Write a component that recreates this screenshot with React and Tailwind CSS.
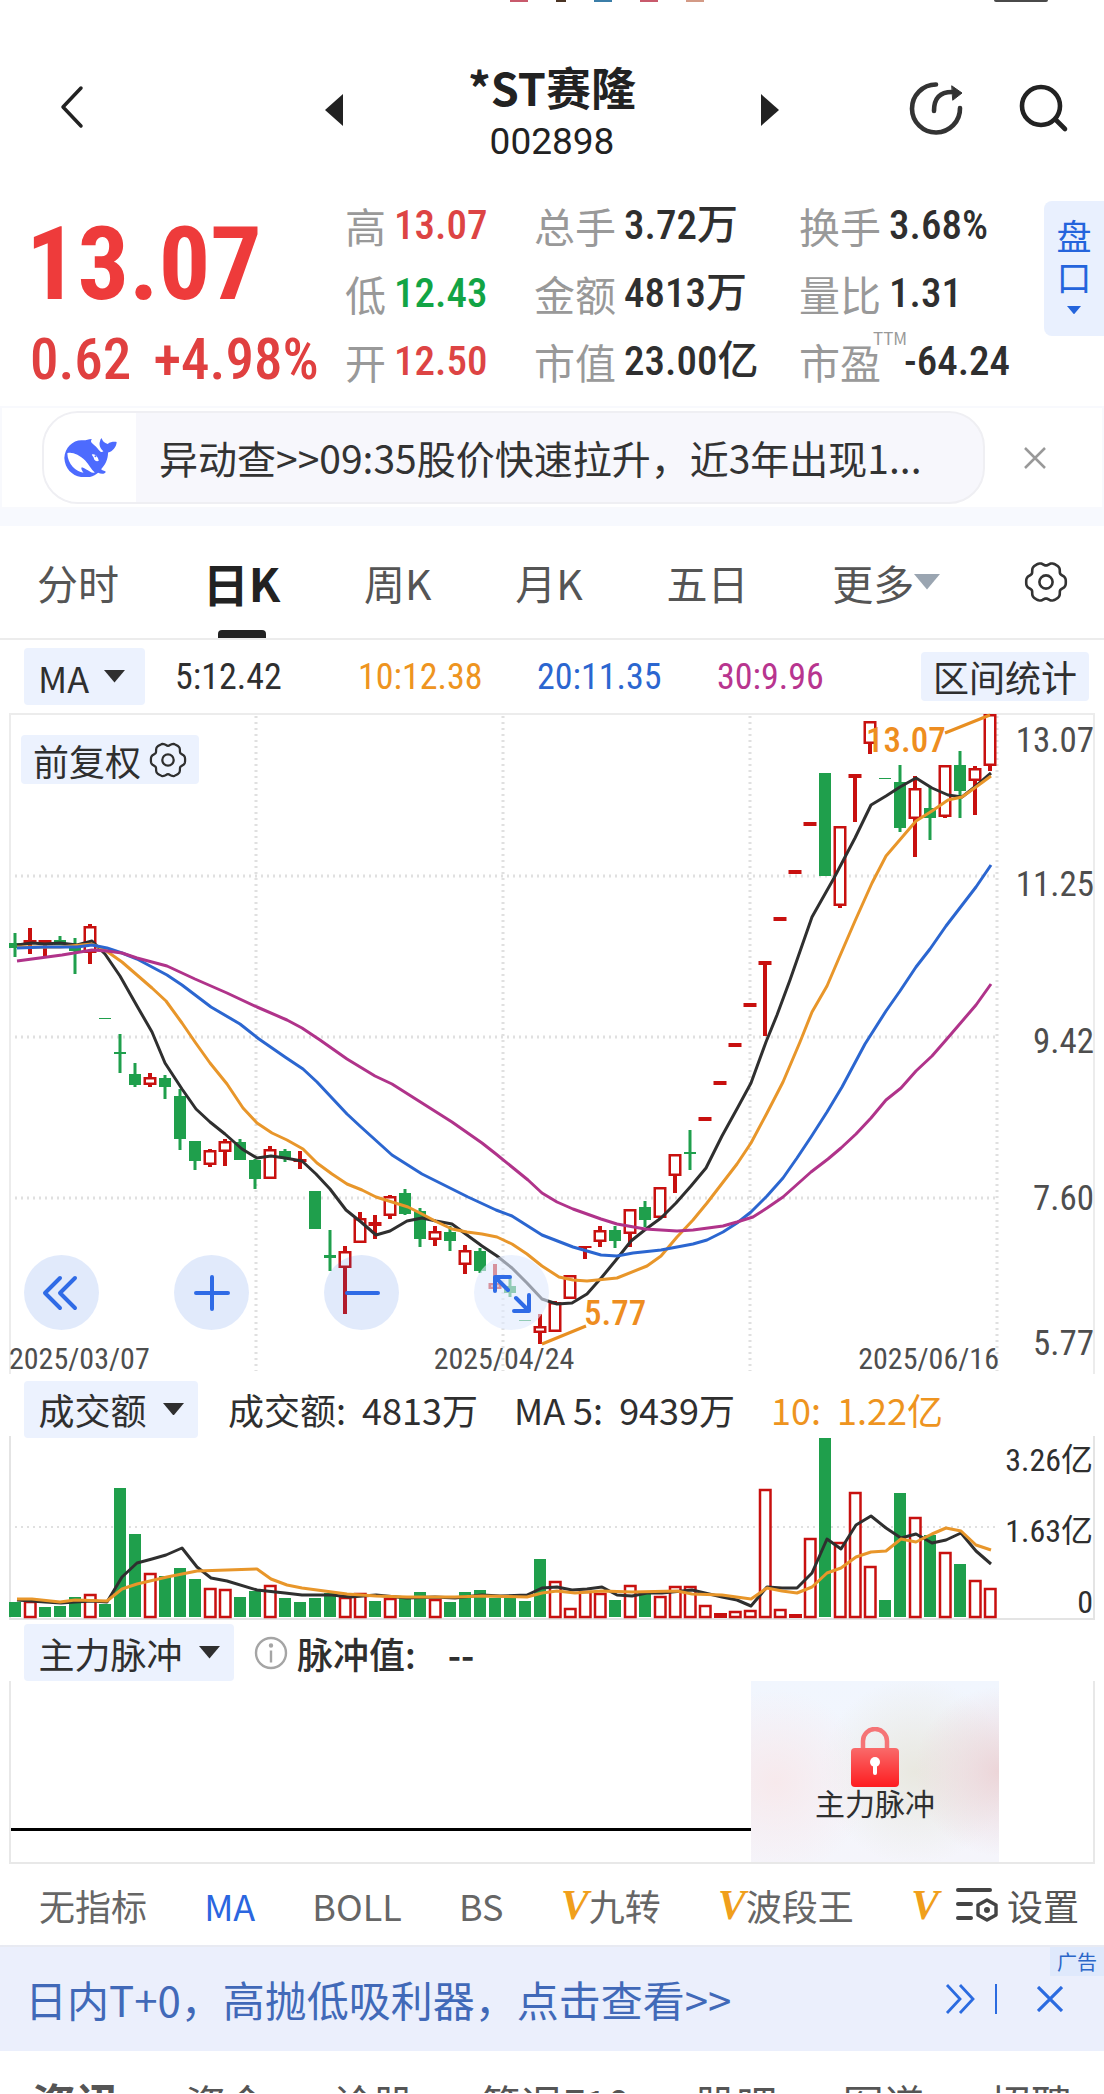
import React from "react";

const RED = "#c8100f";
const GREEN = "#1f9f4c";

/* [high, body top, body bottom, low, kind]  g: fall, r: rise, d: flat */
const CANDLES = [
  [933, 943, 948, 957, "g"], [928, 940, 944, 954, "r"], [940, 940, 944, 957, "r"], [936, 940, 945, 945, "g"],
  [938, 946, 951, 974, "g"], [924, 926, 953, 964, "r"], [1018, 1018, 1019, 1019, "d"], [1034, 1052, 1054, 1073, "g"],
  [1063, 1074, 1085, 1087, "g"], [1073, 1077, 1085, 1087, "r"], [1075, 1078, 1087, 1099, "g"], [1089, 1096, 1139, 1150, "g"],
  [1141, 1141, 1161, 1170, "g"], [1149, 1150, 1165, 1167, "r"], [1139, 1141, 1152, 1166, "r"], [1139, 1142, 1160, 1160, "g"],
  [1159, 1160, 1179, 1189, "g"], [1146, 1149, 1179, 1179, "r"], [1149, 1151, 1158, 1162, "g"], [1151, 1159, 1162, 1169, "r"],
  [1191, 1191, 1229, 1229, "g"], [1230, 1255, 1258, 1271, "g"], [1246, 1251, 1268, 1314, "r"], [1212, 1218, 1243, 1243, "r"],
  [1215, 1222, 1226, 1239, "r"], [1195, 1196, 1216, 1219, "r"], [1189, 1193, 1214, 1215, "g"], [1208, 1211, 1239, 1247, "g"],
  [1226, 1231, 1240, 1246, "r"], [1226, 1232, 1241, 1251, "g"], [1245, 1250, 1265, 1274, "r"], [1248, 1251, 1271, 1273, "g"],
  [1264, 1283, 1289, 1290, "r"], [1277, 1286, 1293, 1297, "g"], [1320, 1320, 1321, 1321, "d"], [1314, 1326, 1333, 1344, "r"],
  [1301, 1302, 1332, 1332, "r"], [1275, 1275, 1299, 1299, "r"], [1246, 1246, 1248, 1259, "r"], [1226, 1230, 1242, 1247, "r"],
  [1226, 1230, 1241, 1248, "g"], [1209, 1209, 1234, 1247, "r"], [1201, 1207, 1220, 1227, "g"], [1187, 1187, 1218, 1218, "r"],
  [1154, 1154, 1176, 1193, "r"], [1130, 1152, 1154, 1170, "g"], [1117, 1117, 1121, 1121, "r"], [1081, 1081, 1085, 1085, "r"],
  [1043, 1043, 1047, 1047, "r"], [1003, 1003, 1007, 1007, "r"], [961, 961, 965, 1036, "r"], [917, 917, 921, 921, "r"],
  [870, 870, 874, 874, "r"], [822, 822, 826, 826, "r"], [773, 773, 876, 876, "g"], [826, 826, 906, 908, "r"],
  [774, 774, 778, 822, "r"], [721, 721, 744, 754, "r"], [778, 778, 779, 779, "d"], [765, 782, 828, 832, "g"],
  [776, 788, 819, 857, "r"], [787, 808, 818, 840, "g"], [765, 765, 817, 818, "r"], [751, 765, 791, 818, "g"],
  [766, 768, 781, 815, "r"], [714, 714, 766, 771, "r"],
];

const VOLUMES = [
  [1602, "g"], [1601, "r"], [1607, "g"], [1606, "g"], [1597, "g"], [1594, "r"], [1604, "g"], [1488, "g"], [1534, "g"],
  [1573, "r"], [1576, "g"], [1568, "g"], [1579, "g"], [1588, "r"], [1589, "r"], [1597, "g"], [1591, "g"], [1585, "r"],
  [1598, "g"], [1602, "g"], [1598, "g"], [1593, "g"], [1597, "r"], [1593, "r"], [1601, "g"], [1598, "r"], [1598, "g"],
  [1592, "g"], [1599, "r"], [1602, "g"], [1592, "g"], [1590, "g"], [1598, "g"], [1598, "g"], [1601, "g"], [1559, "g"],
  [1581, "r"], [1608, "r"], [1591, "r"], [1593, "r"], [1600, "g"], [1585, "r"], [1593, "g"], [1596, "r"], [1586, "r"],
  [1586, "r"], [1605, "r"], [1613, "r"], [1611, "r"], [1610, "r"], [1489, "r"], [1609, "r"], [1614, "r"], [1538, "r"],
  [1438, "g"], [1542, "r"], [1492, "r"], [1566, "r"], [1600, "g"], [1493, "g"], [1517, "r"], [1535, "g"], [1552, "r"],
  [1564, "g"], [1580, "r"], [1588, "r"],
];

const MA5 = "17,945 32,943 45,944 60,943 77,945 92,941 105,954 120,976 137,1006 152,1032 165,1063 182,1089 196,1109 210,1122 225,1134 242,1149 257,1158 271,1156 285,1158 302,1161 316,1174 330,1189 346,1210 361,1222 376,1235 390,1231 407,1221 422,1218 436,1221 452,1224 467,1235 482,1246 497,1256 512,1268 527,1283 542,1299 557,1304 572,1303 587,1294 602,1277 616,1260 631,1241 646,1229 661,1218 676,1203 691,1186 706,1168 722,1136 738,1107 751,1083 766,1042 777,1015 790,980 812,917 834,878 855,838 871,805 886,796 900,787 916,778 932,788 948,795 962,797 976,786 991,773";
const MA10 = "17,947 60,947 92,944 105,950 122,962 137,975 152,988 166,1001 182,1023 195,1042 210,1063 227,1084 243,1108 257,1123 272,1133 287,1140 303,1149 317,1163 332,1174 347,1184 362,1190 376,1197 392,1202 408,1207 422,1214 437,1222 452,1229 467,1232 482,1234 497,1237 512,1244 527,1254 542,1266 559,1277 573,1280 587,1281 617,1278 647,1266 661,1256 677,1237 693,1220 707,1203 737,1164 751,1143 767,1113 783,1082 800,1042 812,1012 827,986 839,958 855,921 872,883 886,856 916,821 932,811 948,800 962,797 976,787 991,776";
const MA20 = "17,948 45,947 77,947 92,945 107,948 122,953 137,959 152,967 167,975 182,985 211,1007 240,1024 259,1039 285,1057 303,1069 317,1082 347,1114 361,1127 392,1155 422,1174 438,1182 468,1197 496,1210 512,1216 542,1235 573,1247 601,1255 617,1256 633,1253 661,1250 693,1244 707,1240 723,1232 737,1223 751,1212 767,1196 783,1178 797,1158 811,1137 827,1112 842,1087 865,1044 886,1011 900,991 916,967 930,949 946,926 976,887 991,865";
const MA30 = "17,961 32,959 62,955 80,952 92,950 107,951 122,953 137,958 167,966 195,979 227,993 257,1007 287,1020 302,1028 320,1040 347,1059 375,1076 392,1084 422,1103 452,1122 482,1143 496,1154 512,1167 528,1180 542,1193 557,1202 573,1209 601,1219 617,1224 645,1229 677,1231 693,1230 723,1226 737,1222 753,1217 767,1208 783,1197 811,1172 828,1159 841,1148 856,1134 871,1118 886,1100 901,1088 916,1071 932,1056 946,1040 976,1005 991,984";
const VMA5 = "17,1600 45,1602 61,1603 75,1602 92,1601 107,1602 122,1577 137,1563 152,1559 166,1555 182,1548 197,1567 211,1578 227,1581 257,1590 285,1593 302,1595 332,1595 350,1597 376,1595 407,1598 435,1597 455,1598 482,1595 500,1596 527,1595 542,1588 557,1587 572,1590 587,1589 602,1587 617,1595 632,1596 647,1593 662,1593 692,1590 722,1597 737,1600 751,1606 767,1587 782,1588 797,1588 812,1573 827,1539 841,1549 856,1525 871,1516 886,1528 901,1538 916,1534 932,1543 946,1540 961,1533 976,1551 991,1564";
const VMA10 = "17,1599 32,1599 60,1602 75,1600 107,1601 122,1589 137,1584 167,1577 197,1571 227,1570 257,1569 271,1579 287,1585 302,1588 332,1592 347,1594 376,1596 407,1597 455,1597 482,1596 527,1597 542,1593 557,1591 575,1593 602,1591 632,1592 677,1591 692,1594 722,1595 751,1599 767,1588 782,1591 797,1593 812,1587 827,1573 841,1568 856,1557 871,1552 886,1551 901,1539 916,1542 932,1534 946,1528 961,1531 976,1545 991,1550";

const GEAR = (() => {
  const pts = [];
  for (let i = 0; i < 96; i += 1) {
    const t = (i / 96) * Math.PI * 2;
    const r = 18.6 + 1.7 * Math.cos(6 * t) - 0.5 * Math.cos(12 * t);
    pts.push(`${(22 + r * Math.cos(t)).toFixed(2)},${(22 + r * Math.sin(t)).toFixed(2)}`);
  }
  return pts.join(" ");
})();

function Gear({ className }) {
  return (
    <svg viewBox="0 0 44 44" className={className} fill="none" stroke="currentColor" strokeWidth="2.6" strokeLinejoin="round" aria-hidden="true">
      <polygon points={GEAR} />
      <circle cx="22" cy="22" r="6.6" />
    </svg>
  );
}

function Down({ className }) {
  return (
    <svg viewBox="0 0 20 12" className={className} fill="currentColor" aria-hidden="true">
      <path d="M0 0h20L10 12z" />
    </svg>
  );
}

function Whale() {
  return (
    <svg viewBox="0 0 160 120" className="w-[53px]" aria-hidden="true">
      <path fill="#4d6bfe" d="M1 60C3 28 28 5 56 7c10 1 16-3 28-4-4 6-3 10 1 13 8 7 15 13 20 20 5 6 9 8 14 4-9-7-15-18-10-31 1-5 3-8 5-8 1 8 8 14 18 17 8-6 17-7 27-6-1 16-12 28-26 32 0 21-9 38-21 50 5 5 13 5 14 8-2 8-15 7-23 3-9 8-20 14-38 14C31 119 3 97 1 60z" />
      <path fill="#fff" d="M10 46c13-5 36 4 54 22 12 13 18 28 29 36-10 3-15-4-21-7-7-3-9-6-18-9-4 3 0 9 5 17C36 101 11 79 10 46z" />
      <path fill="#fff" d="M84 50c9-4 19 6 21 19-8 3-14-2-15-8 0-4-5-6-6-11z" />
      <circle cx="95" cy="55" r="3" fill="#4d6bfe" />
    </svg>
  );
}

function Candle({ c, i }) {
  const [hi, top, bot, lo, kind] = c;
  const x = 15 + i * 15;
  if (kind === "d") return <rect x={x - 6} y={top} width="12" height="1" fill={GREEN} />;
  const col = kind === "g" ? GREEN : RED;
  const wick = kind === "g" ? 3 : 4;
  const hollow = kind === "r" && bot - top > 5;
  const w = kind === "g" ? 12 : 13;
  return (
    <g fill={col}>
      {top > hi && <rect x={x - wick / 2} y={hi} width={wick} height={top - hi} />}
      {lo > bot && <rect x={x - wick / 2} y={bot} width={wick} height={lo - bot} />}
      {hollow ? (
        <rect x={x - 5.25} y={top + 1.25} width="10.5" height={bot - top - 2.5} fill="#fff" stroke={col} strokeWidth="2.5" />
      ) : (
        <rect x={x - w / 2} y={top} width={w} height={bot - top} />
      )}
    </g>
  );
}

const line = { fill: "none", strokeWidth: 3, strokeLinejoin: "round" };
const dots = { stroke: "#e0e0e0", strokeWidth: 3, strokeDasharray: "2 4" };

function PriceChart() {
  return (
    <svg viewBox="0 713 1104 661" className="block w-full font-['Roboto_Condensed','Roboto',sans-serif]" role="img" aria-label="日K">
      <path d="M10 1374V714H1094V1374" fill="none" stroke="#ececec" strokeWidth="2" />
      <path d="M15 876H996M15 1037H996M15 1198H996" {...dots} />
      <path d="M256 716V1371M503 716V1371M750 716V1371M997 716V1371" {...dots} />
      {CANDLES.map((c, i) => <Candle key={i} c={c} i={i} />)}
      <polyline points={MA5} stroke="#2f2f2f" {...line} />
      <polyline points={MA10} stroke="#e8962a" {...line} />
      <polyline points={MA20} stroke="#2b66d0" {...line} />
      <polyline points={MA30} stroke="#b0338a" {...line} />
      <path d="M945 733L990 715M542 1344L586 1326" stroke="#e88f22" strokeWidth="3" />
      <g fontSize="35" fontWeight="500" fill="#ee8d20">
        <text x="866" y="752">13.07</text>
        <text x="584" y="1325">5.77</text>
      </g>
      <g fontSize="35" fill="#4e4e4e" textAnchor="end">
        <text x="1094" y="752">13.07</text>
        <text x="1094" y="896">11.25</text>
        <text x="1094" y="1053">9.42</text>
        <text x="1094" y="1210">7.60</text>
        <text x="1094" y="1355">5.77</text>
      </g>
      <g fontSize="30" fill="#4e4e4e">
        <text x="9" y="1369">2025/03/07</text>
        <text x="504" y="1369" textAnchor="middle">2025/04/24</text>
        <text x="999" y="1369" textAnchor="end">2025/06/16</text>
      </g>
    </svg>
  );
}

function VolumeChart() {
  return (
    <svg viewBox="0 1436 1104 184" className="block w-full font-['Roboto_Condensed','Noto_Sans_CJK_SC',sans-serif]" role="img" aria-label="成交额">
      <path d="M10 1436V1619H1094V1436" fill="none" stroke="#e4e4e4" strokeWidth="2" />
      <path d="M15 1527H996" {...dots} strokeWidth="2" />
      {VOLUMES.map(([top, kind], i) => {
        const x = 15 + i * 15;
        if (kind === "g") return <rect key={i} x={x - 6} y={top} width="12" height={1617 - top} fill={GREEN} />;
        if (top > 1612) return <rect key={i} x={x - 6} y={top} width="13" height={1618 - top} fill={RED} />;
        return <rect key={i} x={x - 5} y={top + 1} width="10.5" height={1616 - top} fill="#fff" stroke={RED} strokeWidth="2.5" />;
      })}
      <polyline points={VMA5} stroke="#2f2f2f" {...line} />
      <polyline points={VMA10} stroke="#e8962a" {...line} />
      <g fontSize="32" fill="#2f2f2f" textAnchor="end">
        <text x="1093" y="1471">3.26亿</text>
        <text x="1093" y="1542">1.63亿</text>
        <text x="1093" y="1613">0</text>
      </g>
    </svg>
  );
}

const NUM = "font-['Roboto_Condensed','Noto_Sans_CJK_SC',sans-serif]";

function Quote({ label, value, tone = "text-[#2f2f2f]", sup }) {
  return (
    <div className="flex h-[68px] items-center whitespace-nowrap">
      <dt className="relative text-[41px] text-[#999999]">
        {label}
        {sup && <span className="absolute -top-3 left-[74px] text-[17px]">{sup}</span>}
      </dt>
      <dd className={`${NUM} ${sup ? "ml-[23px]" : "ml-[8px]"} text-[41px] font-medium ${tone}`}>{value}</dd>
    </div>
  );
}

function Round({ label, faint, children }) {
  return (
    <button aria-label={label} className={`flex size-[75px] items-center justify-center rounded-full ${faint ? "bg-[#dfeafd]/60" : "bg-[#2b6be6]/14"}`}>
      <svg viewBox="0 0 40 40" className="size-10" fill="none" stroke="#2f6be6" strokeWidth="4" strokeLinecap="round" strokeLinejoin="round">{children}</svg>
    </button>
  );
}

const Vip = () => <span className="font-['Liberation_Serif',serif] text-[42px] font-bold italic text-[#f09f1c]">V</span>;

export default function App() {
  return (
    <main className="w-full overflow-hidden bg-white font-['Noto_Sans_CJK_SC',sans-serif] leading-none text-[#2f2f2f]">
      <div className="flex h-[3px] items-start justify-end gap-7 pr-14">
        <i className="h-[2px] w-[18px] bg-[#c85a6c]" />
        <i className="h-[2px] w-[10px] bg-[#4a3424]" />
        <i className="h-[2px] w-[18px] bg-[#3b7ea8]" />
        <i className="h-[2px] w-[18px] bg-[#c85a6c]" />
        <i className="mr-[262px] h-[2px] w-[18px] bg-[#d39a86]" />
        <i className="h-[2px] w-[54px] rounded-b bg-[#4a4a4a]" />
      </div>

      <header className="grid h-[200px] grid-cols-[1fr_auto_1fr] items-start pt-[52px]">
        <button aria-label="返回" className="ml-[58px] mt-[30px] w-[26px]">
          <svg viewBox="0 0 26 44" fill="none" stroke="#222" strokeWidth="3.5" strokeLinecap="round" strokeLinejoin="round"><path d="M23 3L5 22l18 19" /></svg>
        </button>
        <div className="flex w-[454px] items-center justify-between">
          <button aria-label="上一只"><svg viewBox="0 0 18 32" className="w-[18px]"><path d="M18 0v32L0 16z" fill="#222" /></svg></button>
          <div className="text-center">
            <h1 className="text-[45px] font-bold leading-[64px] text-[#222]">*ST赛隆</h1>
            <p className="font-['Roboto'] text-[37px] leading-[46px] text-[#222]">002898</p>
          </div>
          <button aria-label="下一只"><svg viewBox="0 0 18 32" className="w-[18px]"><path d="M0 0v32l18-16z" fill="#222" /></svg></button>
        </div>
        <div className="mt-[25px] flex items-center justify-end gap-[54px] pr-[34px]">
          <button aria-label="分享">
            <svg viewBox="0 0 56 56" className="size-14" fill="none" stroke="#333" strokeWidth="4.6" strokeLinecap="round">
              <path d="M28 4.500A24 24 0 1 0 52 28" />
              <path d="M26 31c0-12 5-19 18-19" />
              <path d="M44 6l10 7-9 7z" fill="#333" strokeWidth="1" strokeLinejoin="round" />
            </svg>
          </button>
          <button aria-label="搜索">
            <svg viewBox="0 0 52 50" className="w-[52px]" fill="none" stroke="#222" strokeWidth="4.600" strokeLinecap="round">
              <circle cx="23" cy="23" r="19" /><path d="M38 37l9 9" />
            </svg>
          </button>
        </div>
      </header>

      <section className="grid h-[203px] grid-cols-[345px_189px_265px_1fr_60px]">
        <div className={`${NUM} pl-[26px] text-[#ee3b3b]`}>
          <p className="mt-[9px] text-[102px] font-bold leading-[104px]">13.07</p>
          <p className="mt-[14px] flex gap-[22px] pl-1 text-[57px] font-medium leading-[60px] text-[#e04040]"><span>0.62</span><span>+4.98%</span></p>
        </div>
        <dl className="-mt-3"><Quote label="高" value="13.07" tone="text-[#dd4444]" /><Quote label="低" value="12.43" tone="text-[#12a445]" /><Quote label="开" value="12.50" tone="text-[#dd4444]" /></dl>
        <dl className="-mt-3"><Quote label="总手" value="3.72万" /><Quote label="金额" value="4813万" /><Quote label="市值" value="23.00亿" /></dl>
        <dl className="-mt-3"><Quote label="换手" value="3.68%" /><Quote label="量比" value="1.31" /><Quote label="市盈" value="-64.24" sup="TTM" /></dl>
        <button className="mt-[-2px] flex h-[135px] flex-col items-center rounded-l-lg bg-[#e9f0fe] pt-[13px] text-[35px] leading-[41px] text-[#2464dc]">
          <span>盘</span><span>口</span><Down className="mt-[10px] w-[14px]" />
        </button>
      </section>

      <section className="flex h-[103px] items-center border-2 border-[#f8f9fd] pl-10">
        <div className="flex h-[93px] w-[943px] overflow-hidden rounded-[36px] border-2 border-[#efeff3] bg-[#f7f7fc]">
          <span className="flex w-[92px] shrink-0 items-center bg-white pl-5"><Whale /></span>
          <a href="#notice" className="whitespace-nowrap pl-[23px] text-[39px] leading-[88px] text-[#333]">异动查&gt;&gt;09:35股价快速拉升，近3年出现1...</a>
        </div>
        <button aria-label="关闭" className="ml-[39px]">
          <svg viewBox="0 0 22 22" className="w-[22px]" stroke="#999" strokeWidth="2.500"><path d="M1 1l20 20M21 1L1 21" /></svg>
        </button>
      </section>
      <div className="h-[17px] bg-[#f7f9fe]" />

      <nav className="flex h-[114px] items-stretch justify-between border-b-2 border-[#ececec] pl-[37px] pr-9 text-[41px] text-[#555]">
        <button>分时</button>
        <button className="relative text-[46px] font-bold text-[#222]">日K<i className="absolute bottom-0 left-1/2 h-2 w-12 -translate-x-1/2 rounded-t bg-[#222]" /></button>
        <button>周K</button>
        <button>月K</button>
        <button>五日</button>
        <button className="flex items-center">更多<Down className="w-[26px] text-[#9aa5b1]" /></button>
        <button aria-label="设置"><Gear className="size-11 text-[#333]" /></button>
      </nav>

      <div className="grid h-[73px] grid-cols-[151px_183px_179px_180px_1fr] items-center pl-6 pr-[15px]">
        <button className="flex h-[57px] w-[121px] items-center gap-[15px] rounded bg-[#ecf2fe] pl-[14px] text-[36px]">MA<Down className="w-[21px]" /></button>
        <span className={`${NUM} text-[36px]`}>5:12.42</span>
        <span className={`${NUM} text-[36px] text-[#ee9420]`}>10:12.38</span>
        <span className={`${NUM} text-[36px] text-[#2b66d0]`}>20:11.35</span>
        <span className="flex items-center justify-between">
          <span className={`${NUM} text-[36px] text-[#b8358f]`}>30:9.96</span>
          <button className="h-[49px] rounded bg-[#ecf2fe] px-3 text-[36px] leading-[49px]">区间统计</button>
        </span>
      </div>

      <section className="relative">
        <PriceChart />
        <button className="absolute left-[21px] top-[22px] flex h-[49px] items-center gap-2 rounded bg-[#ecf2fe] px-3 text-[36px]">前复权<Gear className="size-[38px]" /></button>
        <div className="absolute bottom-[44px] left-6 flex gap-[75px]">
          <Round label="更早"><path d="M18 5L3 20l15 15M33 5L18 20l15 15" /></Round>
          <Round label="放大"><path d="M4 20h32M20 4v32" /></Round>
          <Round label="缩小"><path d="M5 20h31" /></Round>
          <Round label="全屏" faint><path d="M3 18V4h15M5 6l11 11M37 22v16H22M35 36L24 25" /></Round>
        </div>
      </section>

      <div className="flex h-[62px] items-center whitespace-nowrap pl-6 pt-2 text-[36px]">
        <button className="flex h-[57px] w-[174px] items-center justify-center gap-[16px] rounded bg-[#ecf2fe]">成交额<Down className="w-[21px]" /></button>
        <span className="ml-[30px]">成交额:</span>
        <span className="ml-[16px]">4813万</span>
        <span className="ml-[36px]">MA 5:</span>
        <span className="ml-[16px]">9439万</span>
        <span className="ml-[36px] text-[#ee9420]">10:</span>
        <span className="ml-[16px] text-[#ee9420]">1.22亿</span>
      </div>
      <VolumeChart />
      <div className="flex h-[61px] items-center whitespace-nowrap pl-6 pt-1 text-[36px]">
        <button className="flex h-[57px] w-[210px] items-center justify-center gap-[16px] rounded bg-[#ecf2fe]">主力脉冲<Down className="w-[21px]" /></button>
        <svg viewBox="0 0 34 34" className="ml-[20px] w-[34px]" fill="none" stroke="#a5a5a5" strokeWidth="2.4" aria-hidden="true">
          <circle cx="17" cy="17" r="15" /><path d="M17 14.500v12" /><circle cx="17" cy="9.500" r="1" fill="#a5a5a5" />
        </svg>
        <span className="ml-[9px] font-medium">脉冲值:</span>
        <span className="ml-[32px] font-bold">--</span>
      </div>

      <section className="mx-[9px] flex h-[183px] border-x-2 border-b-2 border-[#e8e8e8]">
        <div className="mb-[31px] flex-1 border-b-3 border-black" />
        <button className="flex w-[248px] flex-col items-center bg-[radial-gradient(circle_at_100%_50%,#ecd5d8_0%,transparent_32%),radial-gradient(circle_at_10%_56%,#f7e9ec_0%,transparent_38%),radial-gradient(circle_at_66%_50%,#e9e8e0_0%,transparent_50%),linear-gradient(#f1f6fe,#f5f5fb)] pt-[46px] text-[30px]">
          <svg viewBox="0 0 48 60" className="h-[60px] w-12" aria-hidden="true">
            <defs><linearGradient id="lock" x1="0" y1="0" x2="0" y2="1"><stop offset="0" stopColor="#f96a6a" /><stop offset="1" stopColor="#fe1c1f" /></linearGradient></defs>
            <path d="M12 24V14a12 12 0 0 1 24 0v10" fill="none" stroke="#f57476" strokeWidth="4.500" />
            <rect y="21" width="48" height="39" rx="4" fill="url(#lock)" />
            <circle cx="24" cy="35" r="5" fill="#fff" /><rect x="22" y="37" width="4" height="11" rx="2" fill="#fff" />
          </svg>
          <span>主力脉冲</span>
        </button>
        <div className="w-[94px]" />
      </section>

      <nav className="flex h-[81px] items-center justify-between whitespace-nowrap pl-[39px] pr-[25px] text-[36px] text-[#666]">
        <button>无指标</button>
        <button className="text-[#2b66e0]">MA</button>
        <button>BOLL</button>
        <button>BS</button>
        <button className="flex items-center"><Vip />九转</button>
        <button className="flex items-center"><Vip />波段王</button>
        <div className="flex items-center gap-4">
          <Vip />
          <button className="flex items-center gap-2 text-[#555]">
            <svg viewBox="0 0 44 36" className="w-11" fill="none" stroke="#444" strokeWidth="4" strokeLinecap="round" aria-hidden="true">
              <path d="M3 3h32M3 17h13M3 31h13" />
              <path d="M32 13l9 5v10l-9 5-9-5V18z" strokeWidth="3.400" strokeLinejoin="round" /><circle cx="32" cy="23" r="3" fill="#444" stroke="none" />
            </svg>
            设置
          </button>
        </div>
      </nav>

      <aside className="relative flex h-[106px] items-center border-t-2 border-[#e8eaf2] bg-[#ebeffc] pl-[25px] pr-[41px] text-[42px] text-[#4169b8]">
        <a href="#ad" className="flex-1">日内T+0，高抛低吸利器，点击查看&gt;&gt;</a>
        <svg viewBox="0 0 30 30" className="mr-[20px] w-[30px]" fill="none" stroke="#2b6be0" strokeWidth="2.800" aria-hidden="true"><path d="M2 1l13 14L2 29M15 1l13 14-13 14" /></svg>
        <i className="mr-[40px] h-[30px] w-[2px] bg-[#2b6be0]" />
        <button aria-label="关闭广告"><svg viewBox="0 0 26 26" className="w-[26px]" stroke="#2b6be0" strokeWidth="3.200"><path d="M1 1l24 24M25 1L1 25" /></svg></button>
        <span className="absolute right-0 top-0 h-[29px] bg-[#dfe9fc] px-[7px] text-[20px] leading-[29px] text-[#2b66c8]">广告</span>
      </aside>

      <nav className="flex h-[42px] items-start justify-between overflow-hidden whitespace-nowrap pl-8 pr-8 pt-[28px] text-[41px] leading-[46px] text-[#555]">
        <button className="text-[44px] font-bold">资讯</button>
        <button>资金</button>
        <button>诊股</button>
        <button>简况F10</button>
        <button>股吧</button>
        <button>图谱</button>
        <button>招聘</button>
      </nav>
    </main>
  );
}
